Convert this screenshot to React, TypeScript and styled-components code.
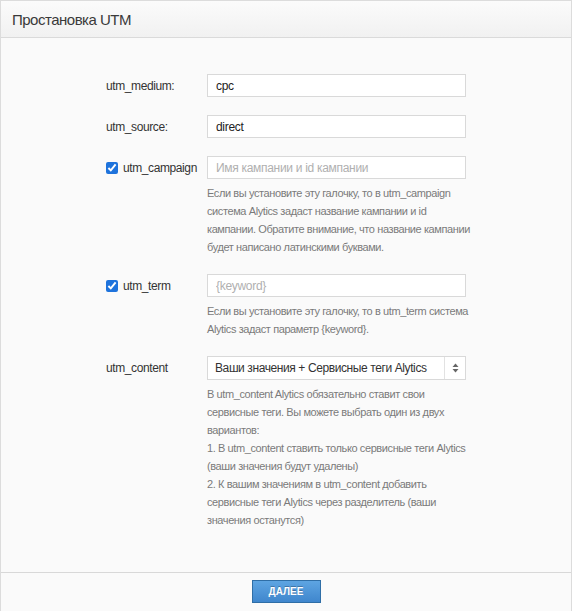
import styled, { createGlobalStyle } from 'styled-components'

const GlobalStyle = createGlobalStyle`
  html, body {
    margin: 0;
    padding: 0;
    background: #fafafa;
  }
  * {
    box-sizing: border-box;
  }
`

const campaignHelp = [
  'Если вы установите эту галочку, то в utm_campaign',
  'система Alytics задаст название кампании и id',
  'кампании. Обратите внимание, что название кампании',
  'будет написано латинскими буквами.',
]

const termHelp = [
  'Если вы установите эту галочку, то в utm_term система',
  'Alytics задаст параметр {keyword}.',
]

const contentHelp = [
  'В utm_content Alytics обязательно ставит свои',
  'сервисные теги. Вы можете выбрать один из двух',
  'вариантов:',
  '1. В utm_content ставить только сервисные теги Alytics',
  '(ваши значения будут удалены)',
  '2. К вашим значениям в utm_content добавить',
  'сервисные теги Alytics через разделитель (ваши',
  'значения останутся)',
]

const HelpText = ({ lines, name }: { lines: string[]; name: string }) => (
  <Help>
    {lines.map((line, i) => (
      <HelpLine key={`${name}-help-${i}`}>{line}</HelpLine>
    ))}
  </Help>
)

const App = () => {
  return (
    <>
      <GlobalStyle />
      <Page>
        <Header>
          <Title>Простановка UTM</Title>
        </Header>

        <Body>
          <Form>
            <Label>utm_medium:</Label>
            <Control>
              <Input defaultValue='cpc' />
            </Control>

            <Label>utm_source:</Label>
            <Control>
              <Input defaultValue='direct' />
            </Control>

            <Label>
              <Check type='checkbox' defaultChecked />
              utm_campaign
            </Label>
            <Control>
              <Input placeholder='Имя кампании и id кампании' />
              <HelpText lines={campaignHelp} name='campaign' />
            </Control>

            <Label>
              <Check type='checkbox' defaultChecked />
              utm_term
            </Label>
            <Control>
              <Input placeholder='{keyword}' />
              <HelpText lines={termHelp} name='term' />
            </Control>

            <Label>utm_content</Label>
            <Control>
              <SelectBox>
                <Select defaultValue='both'>
                  <option value='both'>Ваши значения + Сервисные теги Alytics</option>
                  <option value='only'>Только сервисные теги Alytics</option>
                </Select>
                <SelectArrow>
                  <svg width='7' height='10' viewBox='0 0 7 10'>
                    <path d='M3.5 0.5 L6.5 4 L0.5 4 Z' fill='#666' />
                    <path d='M3.5 9.5 L6.5 6 L0.5 6 Z' fill='#666' />
                  </svg>
                </SelectArrow>
              </SelectBox>
              <HelpText lines={contentHelp} name='content' />
            </Control>
          </Form>
        </Body>

        <Footer>
          <NextButton>Далее</NextButton>
        </Footer>
      </Page>
    </>
  )
}

export default App

const Page = styled.div`
  height: 611px;
  display: flex;
  flex-direction: column;
  border: 1px solid #dcdcdc;
  border-bottom: none;
  background: #fafafa;
  font-family: 'Liberation Sans', Arial, sans-serif;
  color: #333;
`

const Header = styled.div`
  height: 37px;
  display: flex;
  align-items: center;
  padding: 0 11px;
  background: linear-gradient(#fbfbfb, #f1f1f1);
  border-bottom: 1px solid #dadada;
`

const Title = styled.h1`
  margin: 0;
  font-size: 15px;
  font-weight: normal;
  letter-spacing: -0.5px;
  color: #3a3a3a;
`

const Body = styled.div`
  flex: 1;
  padding-top: 36px;
`

const Form = styled.div`
  display: grid;
  grid-template-columns: 101px 259px;
  justify-content: center;
  row-gap: 18px;
`

const Label = styled.label`
  display: flex;
  align-items: center;
  align-self: start;
  gap: 5px;
  height: 23px;
  font-size: 12px;
  letter-spacing: -0.4px;
  color: #333;
`

const Check = styled.input`
  width: 12px;
  height: 12px;
  margin: 0;
  accent-color: #1e73dc;
`

const Control = styled.div`
  display: flex;
  flex-direction: column;
`

const Input = styled.input`
  height: 23px;
  width: 100%;
  padding: 0 8px;
  border: 1px solid #d9d9d9;
  background: #fff;
  font-family: inherit;
  font-size: 12px;
  letter-spacing: -0.3px;
  color: #222;
  outline: none;

  &::placeholder {
    color: #b0b0b0;
  }
`

const SelectBox = styled.div`
  display: flex;
  height: 24px;
  border: 1px solid #d9d9d9;
  background: #fff;
`

const Select = styled.select`
  flex: 1;
  min-width: 0;
  appearance: none;
  border: none;
  background: transparent;
  padding: 0 7px;
  font-family: inherit;
  font-size: 12px;
  letter-spacing: -0.4px;
  color: #333;
  outline: none;
`

const SelectArrow = styled.div`
  width: 21px;
  display: flex;
  align-items: center;
  justify-content: center;
  border-left: 1px solid #e2e2e2;
`

const Help = styled.div`
  margin-top: 5px;
  font-size: 11px;
  line-height: 18px;
  letter-spacing: -0.4px;
  color: #7a7a7a;
`

const HelpLine = styled.div`
  white-space: nowrap;
`

const Footer = styled.div`
  height: 39px;
  display: flex;
  justify-content: center;
  padding-top: 7px;
  border-top: 1px solid #d8d8d8;
  background: #fafafa;
`

const NextButton = styled.button`
  width: 69px;
  height: 23px;
  padding: 0;
  border: 1px solid #2f6ea6;
  background: linear-gradient(#5ea5e2, #3f86cd);
  color: #fff;
  font-family: inherit;
  font-size: 10px;
  font-weight: bold;
  text-transform: uppercase;
  text-shadow: 0 -1px 0 rgba(0, 0, 0, 0.25);
  cursor: pointer;
`
